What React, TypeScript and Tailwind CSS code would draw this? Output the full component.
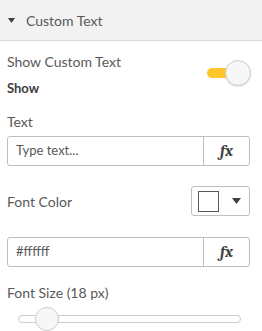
import React from 'react';

const font = { fontFamily: 'Lato, "Open Sans", sans-serif' };

function FxButton() {
  return (
    <button className="w-[46px] h-full border-l border-[#bfbfbf] flex items-center justify-center">
      <span className="italic font-bold text-[16px] text-[#404040] font-serif">fx</span>
    </button>
  );
}

function TextInput({ value, placeholder }: { value?: string; placeholder?: string }) {
  return (
    <div className="h-[30px] flex border border-[#bfbfbf] rounded-[3px] bg-white">
      <div className="flex-1 flex items-center pl-[8px] text-[13px]">
        {value ? (
          <span className="text-[#595959]">{value}</span>
        ) : (
          <span className="text-[#595959]">{placeholder}</span>
        )}
      </div>
      <FxButton />
    </div>
  );
}

export default function App() {
  return (
    <div className="w-[262px] h-[331px] bg-white overflow-hidden text-[#595959]" style={font}>
      {/* Header */}
      <div className="h-[41px] bg-[#f2f2f2] border-b border-[#d9d9d9] flex items-center pl-[8px]">
        <svg width="7" height="5" viewBox="0 0 7 5" className="mr-[11px]">
          <polygon points="0,0 7,0 3.5,5" fill="#404040" />
        </svg>
        <span className="text-[14px] text-[#595959]">Custom Text</span>
      </div>

      <div className="pl-[7px] pr-[12px]">
        {/* Show custom text */}
        <div className="flex justify-between items-start pt-[12px]">
          <div>
            <div className="text-[14px] leading-[18px] text-[#595959]">Show Custom Text</div>
            <div className="text-[13px] leading-[18px] font-bold text-[#404040] mt-[8px]">Show</div>
          </div>
          <div className="relative w-[44px] h-[26px] mt-[7px] mr-[-1px]">
            <div className="absolute left-0 top-[8px] w-[30px] h-[10px] rounded-full bg-[#ffc629]" />
            <div className="absolute right-0 top-0 w-[26px] h-[26px] rounded-full bg-[#f7f7f7] border border-[#cccccc] shadow-[0_1px_1px_rgba(0,0,0,0.1)]" />
          </div>
        </div>

        {/* Text */}
        <div className="text-[14px] leading-[18px] mt-[16px]">Text</div>
        <div className="mt-[5px]">
          <TextInput placeholder="Type text..." />
        </div>

        {/* Font color */}
        <div className="flex items-center justify-between mt-[20px]">
          <span className="text-[14px]">Font Color</span>
          <button className="w-[59px] h-[30px] border border-[#bfbfbf] rounded-[3px] flex items-center pl-[6px]">
            <span className="w-[21px] h-[21px] border border-[#595959] bg-white" />
            <svg width="9" height="6" viewBox="0 0 9 6" className="ml-[13px]">
              <polygon points="0,0 9,0 4.5,6" fill="#404040" />
            </svg>
          </button>
        </div>

        <div className="mt-[21px]">
          <TextInput value="#ffffff" />
        </div>

        {/* Font size */}
        <div className="text-[14px] leading-[18px] mt-[17px]">Font Size (18 px)</div>
        <div className="relative h-[26px] mt-[5px] ml-[11px] mr-[9px]">
          <div className="absolute left-0 right-0 top-[8px] h-[8px] rounded-full border border-[#cccccc] bg-white" />
          <div className="absolute left-[17px] top-0 w-[24px] h-[24px] rounded-full bg-[#f7f7f7] border border-[#cccccc]" />
        </div>
      </div>
    </div>
  );
}
